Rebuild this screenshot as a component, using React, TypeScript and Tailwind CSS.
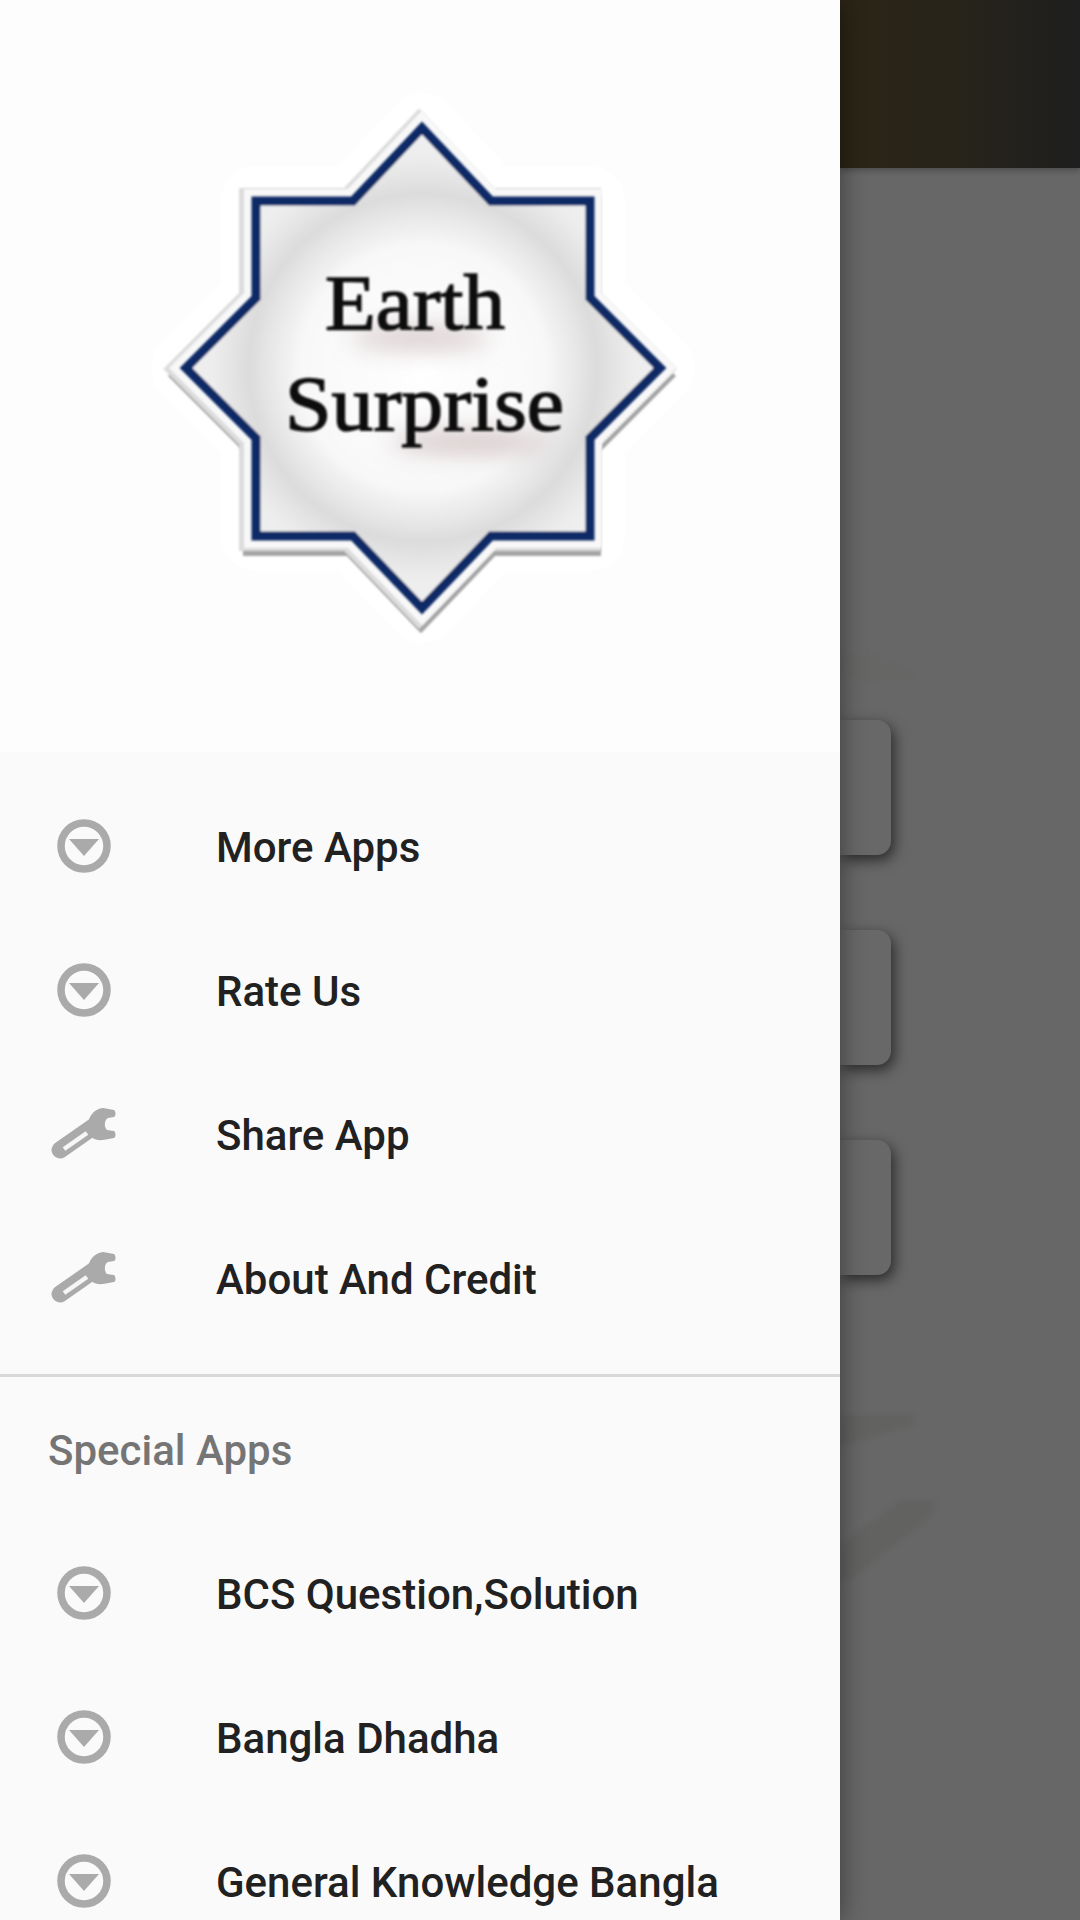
import React from 'react';

const CircleIcon = () => (
  <svg width="66" height="66" viewBox="0 0 66 66" className="blur-[0.6px]">
    <circle cx="33" cy="33" r="23" fill="none" stroke="#aaaaaa" strokeWidth="7.5" />
    <path d="M18 26 H48 L33 43 Z" fill="#aaaaaa" strokeLinejoin="round" />
  </svg>
);

const WrenchIcon = () => (
  <svg width="66" height="66" viewBox="0 0 66 66" className="blur-[0.7px]">
    <path d="M9 49 L42 26" stroke="#aaaaaa" strokeWidth="17" strokeLinecap="round" fill="none" />
    <path
      d="M63 9 C65 11 65 15 63 16 L57 17 C53 19 53 26 56 29 L63 30 C65 32 65 36 63 37 L52 39 C44 40 38 36 37 30 C35 18 42 8 52 7 Z"
      fill="#aaaaaa"
    />
    <path d="M13 48 L36 32" stroke="#f6f6f6" strokeWidth="4.5" fill="none" />
  </svg>
);

const Logo = () => {
  const star = '422,128 491,201 590,201 590,298 660,368 590,438 590,536 491,536 422,608 353,536 256,536 256,438 186,368 256,298 256,201 353,201';
  return (
    <svg width="840" height="752" viewBox="0 0 840 752">
      <defs>
        <radialGradient id="disc" cx="423" cy="368" r="245" gradientUnits="userSpaceOnUse">
          <stop offset="0" stopColor="#ffffff" />
          <stop offset="0.5" stopColor="#f8f8f8" />
          <stop offset="0.71" stopColor="#dcdcdc" />
          <stop offset="0.85" stopColor="#ececec" />
          <stop offset="1" stopColor="#f2f3f4" />
        </radialGradient>
        <filter id="soft">
          <feGaussianBlur stdDeviation="1" />
        </filter>
        <filter id="softer" x="-50%" y="-300%" width="200%" height="700%">
          <feGaussianBlur stdDeviation="12" />
        </filter>
      </defs>
      <polygon points={star} fill="#ffffff" stroke="#ffffff" strokeWidth="70" strokeLinejoin="round" />
      <polygon points={star} fill="#a4a4a4" stroke="#a4a4a4" strokeWidth="24" transform="translate(-1 8)" filter="url(#soft)" />
      <polygon points={star} fill="#dcdcdc" stroke="#dcdcdc" strokeWidth="28" transform="translate(-3 1)" filter="url(#soft)" />
      <polygon points={star} fill="#f8f8f8" stroke="#f8f8f8" strokeWidth="24" filter="url(#soft)" />
      <polygon points={star} fill="url(#disc)" stroke="#102a66" strokeWidth="9" filter="url(#soft)" />
      <ellipse cx="420" cy="338" rx="70" ry="12" fill="#c9b8b8" opacity="0.7" filter="url(#softer)" />
      <ellipse cx="470" cy="442" rx="80" ry="11" fill="#c9b8b8" opacity="0.8" filter="url(#softer)" />
      <g fontFamily='"Liberation Serif", serif' fill="#0e0e0e" stroke="#0e0e0e" strokeWidth="1.5" filter="url(#soft)">
        <text x="325" y="329" fontSize="79" textLength="180" lengthAdjust="spacingAndGlyphs">Earth</text>
        <text x="285" y="430" fontSize="79" textLength="279" lengthAdjust="spacingAndGlyphs">Surprise</text>
      </g>
    </svg>
  );
};

const Row = ({ icon, label }: { icon: 'circle' | 'wrench'; label: string }) => (
  <div className="flex h-[144px] items-center pl-[51px]">
    <div className="w-[165px]">{icon === 'circle' ? <CircleIcon /> : <WrenchIcon />}</div>
    <span className="whitespace-nowrap pt-[3px] text-[42px] font-medium text-[#212121]">{label}</span>
  </div>
);

const StubCard = () => (
  <div className="h-[135px] w-[51px] rounded-r-[14px] bg-[#686868] shadow-[3px_5px_14px_rgba(0,0,0,0.6)]" />
);

export default function App() {
  return (
    <div className="relative flex h-[1920px] w-[1080px] overflow-hidden bg-[#676767] font-['Roboto',sans-serif]">
      <aside className="z-10 h-full w-[840px] shrink-0 bg-[#fafafa] shadow-[0_0_24px_rgba(0,0,0,0.45)]">
        <div className="h-[752px] bg-[#fdfdfd]">
          <Logo />
        </div>
        <div className="pt-[22px]">
          <Row icon="circle" label="More Apps" />
          <Row icon="circle" label="Rate Us" />
          <Row icon="wrench" label="Share App" />
          <Row icon="wrench" label="About And Credit" />
        </div>
        <div className="mt-[24px] h-[3px] bg-[#d8d8d8]" />
        <div className="flex h-[144px] items-center pl-[48px] pt-[2px] text-[42px] font-medium text-[#757575]">Special Apps</div>
        <div>
          <Row icon="circle" label="BCS Question,Solution" />
          <Row icon="circle" label="Bangla Dhadha" />
          <Row icon="circle" label="General Knowledge Bangla" />
        </div>
      </aside>

      <main className="flex min-w-0 flex-1 flex-col">
        <div className="h-[168px] bg-gradient-to-r from-[#2c2416] via-[#27241a] to-[#1e1e1e] shadow-[0_2px_6px_rgba(0,0,0,0.3)]" />
        <div className="flex flex-col gap-[75px] pt-[552px]">
          <StubCard />
          <StubCard />
          <StubCard />
        </div>
      </main>

      {/* faint watermark behind the scrim */}
      <svg className="absolute left-[840px] top-[640px] blur-[2px]" width="240" height="960" viewBox="0 0 240 960">
        <path d="M0 17 L30 15 L75 36 L30 38 L0 34 Z" fill="#63655f" opacity="0.3" />
        <path d="M0 775 H75 L72 785 L0 807 Z" fill="#5f5f5c" opacity="0.55" />
        <path d="M62 860 H95 L92 875 L10 940 L0 938 V905 Z" fill="#5f5f5c" opacity="0.55" />
      </svg>
    </div>
  );
}
